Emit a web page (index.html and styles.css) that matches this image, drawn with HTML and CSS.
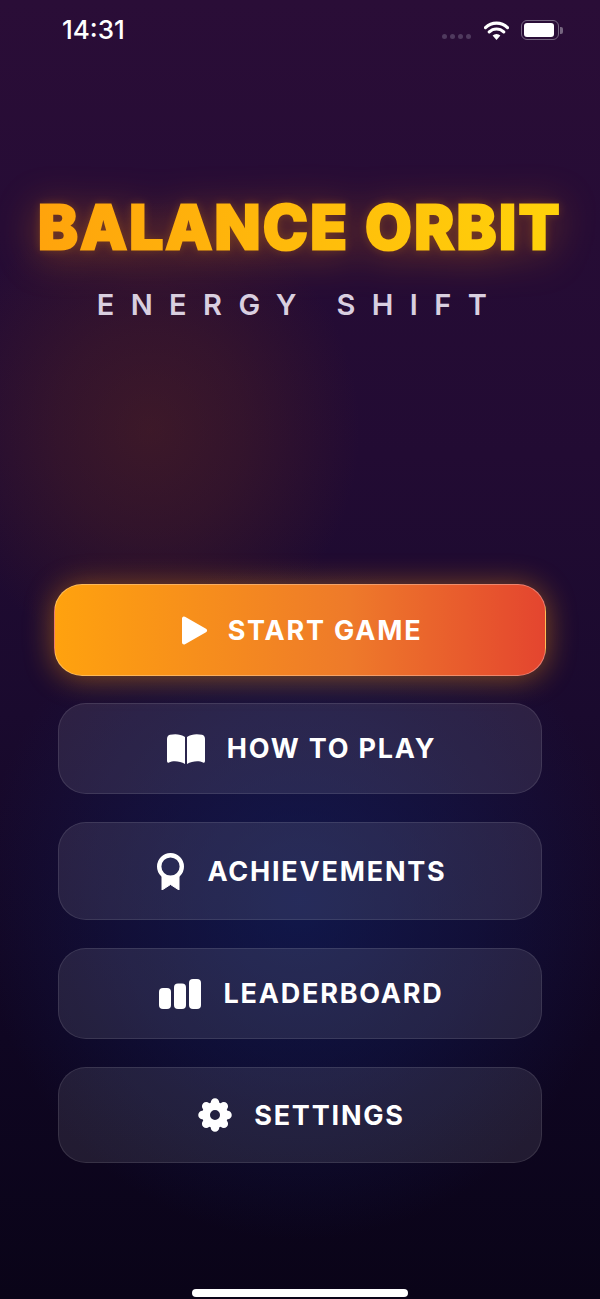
FILE: index.html
```html
<!DOCTYPE html>
<html lang="en">
<head>
  <meta charset="UTF-8" />
  <meta name="viewport" content="width=device-width, initial-scale=1.0"/>
  <title>Balance Orbit</title>
  <link rel="stylesheet" href="styles.css">
</head>
<body>
  <div class="screen">
    <div class="status-bar">
      <span class="clock">14:31</span>
      <div class="status-icons">
        <div class="signal-dots"><i></i><i></i><i></i><i></i></div>
        <svg class="wifi" width="25" height="19" viewBox="0 0 25 19">
          <path d="M12.5 19 8.6 14.6a5.6 5.6 0 0 1 7.8 0Z" fill="#fff"/>
          <path d="M5.3 10.9a10.4 10.4 0 0 1 14.4 0M1.5 6.6a16 16 0 0 1 22 0" fill="none" stroke="#fff" stroke-width="3.2" stroke-linecap="round"/>
        </svg>
        <div class="battery"><div class="battery-level"></div></div>
        <div class="battery-nub"></div>
      </div>
    </div>

    <div class="title-block">
      <h1 class="game-title">BALANCE ORBIT</h1>
      <p class="game-subtitle">ENERGY SHIFT</p>
    </div>

    <div class="menu">
      <button class="menu-btn primary">
        <svg width="27" height="29" viewBox="0 0 27 29"><path d="M3 2.500v24l21-12Z" fill="#fff" stroke="#fff" stroke-width="4" stroke-linejoin="round"/></svg>
        START GAME
      </button>
      <button class="menu-btn how-to">
        <svg width="38" height="31" viewBox="0 0 38 31"><path d="M0 6Q0 2.500 3 1.800C8 .5 14 1 18 4V31C13 28 6 27.500 2 29.500Q0 30.300 0 28ZM20 4C24 1 30 .5 35 1.800Q38 2.500 38 6V28Q38 30.300 36 29.500C32 27.500 25 28 20 31Z" fill="#fff"/></svg>
        HOW TO PLAY
      </button>
      <button class="menu-btn achievements">
        <svg width="29" height="37" viewBox="0 0 29 37">
          <path d="M6 22v15l8.500-5.500 8.500 5.500V22Z" fill="#fff" stroke="#fff" stroke-width="1" stroke-linejoin="round"/>
          <circle cx="14.500" cy="13.500" r="11.300" fill="#282a55" stroke="#fff" stroke-width="4.400"/>
        </svg>
        ACHIEVEMENTS
      </button>
      <button class="menu-btn leaderboard">
        <svg width="42" height="30" viewBox="0 0 42 30">
          <rect x="0" y="9" width="12" height="21" rx="4" fill="#fff"/>
          <rect x="15" y="4.500" width="12" height="25.500" rx="4" fill="#fff"/>
          <rect x="30" y="0" width="12" height="30" rx="4" fill="#fff"/>
        </svg>
        LEADERBOARD
      </button>
      <button class="menu-btn settings">
        <svg width="34" height="34" viewBox="0 0 34 34">
          <circle cx="17" cy="17" r="9" fill="none" stroke="#fff" stroke-width="8"/>
          <path d="M17 4.500v2M17 27.500v2M4.500 17h2M27.500 17h2M8.200 8.200l1.500 1.500M24.300 24.300l1.500 1.500M25.800 8.200l-1.500 1.500M9.700 24.300l-1.500 1.500" stroke="#fff" stroke-width="8.500" stroke-linecap="round"/>
        </svg>
        SETTINGS
      </button>
    </div>

    <div class="home-indicator"></div>
  </div>
</body>
</html>
```

FILE: styles.css
```css
* {
  box-sizing: border-box;
}
html, body {
  margin: 0;
  padding: 0;
  background: #0a0418;
}
.screen {
  width: 600px;
  height: 1299px;
  display: flex;
  flex-direction: column;
  overflow: hidden;
  font-family: Inter, "Liberation Sans", sans-serif;
  color: #fff;
  background:
    radial-gradient(ellipse 210px 230px at 150px 430px, rgba(110, 50, 20, 0.34), rgba(110, 50, 20, 0.22) 45%, rgba(110, 50, 20, 0) 100%),
    radial-gradient(ellipse 320px 340px at 300px 900px, rgba(16, 30, 90, 0.7), rgba(16, 30, 90, 0.35) 55%, rgba(16, 30, 90, 0) 100%),
    linear-gradient(180deg, #2a0d37 0%, #220b33 35%, #1a0a2e 55%, #0f0622 80%, #0a0418 100%);
}

/* status bar */
.status-bar {
  height: 60px;
  padding: 17px 37px 0 62px;
  display: flex;
  justify-content: space-between;
  align-items: flex-start;
}
.clock {
  font-size: 26px;
  font-weight: 500;
  line-height: 26px;
}
.status-icons {
  display: flex;
  align-items: center;
  height: 26px;
}
.signal-dots {
  display: flex;
  gap: 3px;
  margin: 13px 13px 0 0;
}
.signal-dots i {
  width: 5px;
  height: 5px;
  border-radius: 50%;
  background: #4f3a5e;
}
.battery {
  width: 38px;
  height: 20px;
  margin-left: 12px;
  padding: 2px;
  border: 1.500px solid #75657f;
  border-radius: 6px;
}
.battery-level {
  width: 30px;
  height: 100%;
  background: #fff;
  border-radius: 3px;
}
.battery-nub {
  width: 3px;
  height: 7px;
  margin-left: 1px;
  background: #75657f;
  border-radius: 0 2px 2px 0;
}

/* title */
.title-block {
  margin-top: 137px;
  text-align: center;
}
.game-title {
  margin: 0;
  font-size: 60px;
  font-weight: 800;
  line-height: 60px;
  letter-spacing: 2.600px;
  white-space: nowrap;
  background: linear-gradient(90deg, #ffa00c 0%, #ffd60a 100%);
  -webkit-background-clip: text;
  background-clip: text;
  color: transparent;
  -webkit-text-stroke: 3px transparent;
  filter: drop-shadow(0 0 5px rgba(255, 150, 0, 0.22)) drop-shadow(0 5px 20px rgba(255, 130, 0, 0.38));
}
.game-subtitle {
  margin: 31px 0 0;
  font-size: 29px;
  font-weight: 600;
  line-height: 34px;
  letter-spacing: 16.400px;
  color: #d9cfe0;
  white-space: nowrap;
}

/* menu buttons */
.menu {
  margin-top: 262px;
  padding: 0 58px;
  display: flex;
  flex-direction: column;
  gap: 28px;
}
.menu-btn {
  display: flex;
  align-items: center;
  justify-content: center;
  gap: 22px;
  width: 100%;
  height: 91px;
  padding: 0 0 0 3px;
  font-family: inherit;
  font-size: 27px;
  font-weight: 650;
  letter-spacing: 1.800px;
  color: #fff;
  background: rgba(255, 255, 255, 0.09);
  border: 1.500px solid rgba(255, 255, 255, 0.1);
  border-radius: 28px;
}
.menu-btn.primary {
  width: 492px;
  height: 92px;
  margin: 0 -4px -1px;
  gap: 20px;
  background: linear-gradient(90deg, #ffa20e 0%, #ee7a2a 60%, #e4452f 100%);
  border-color: rgba(255, 255, 255, 0.3);
  box-shadow: 0 2px 30px rgba(255, 150, 10, 0.48);
}
.menu-btn.achievements {
  height: 98px;
}
.menu-btn.settings {
  height: 96px;
}

.home-indicator {
  width: 216px;
  height: 8px;
  margin: auto auto 2px;
  background: #fff;
  border-radius: 4px;
}
```
